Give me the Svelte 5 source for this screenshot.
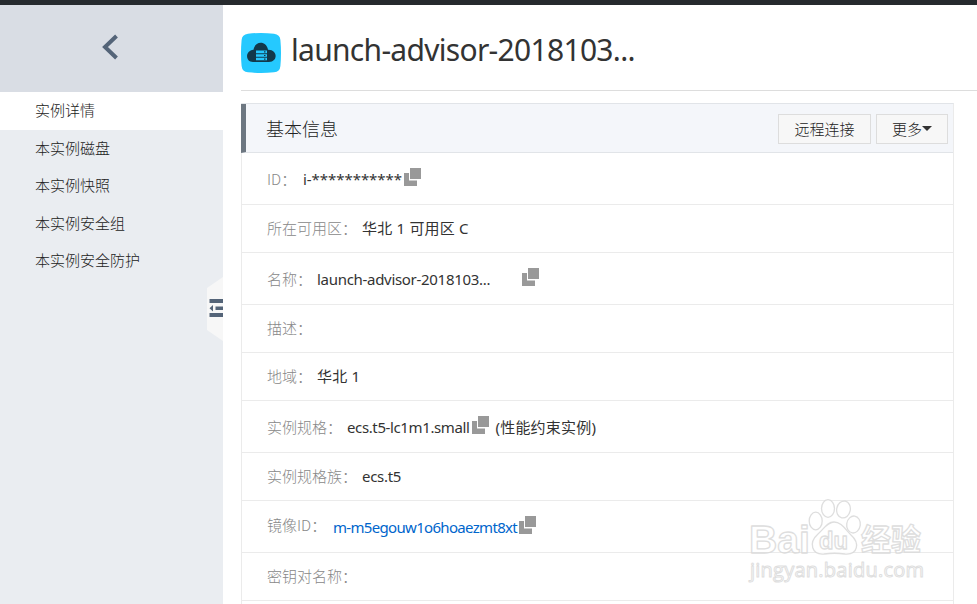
<script>
  const menu = ['实例详情', '本实例磁盘', '本实例快照', '本实例安全组', '本实例安全防护'];
  const rows = [
    { label: 'ID：', value: 'i-***********', w: 36, ls: -0.05, copy: true, tall: true },
    { label: '所在可用区：', value: '华北 1 可用区 C', w: 95, ls: 0.2 },
    { label: '名称：', value: 'launch-advisor-2018103...', w: 50, ls: -0.3, copy: true, tall: true, far: true },
    { label: '描述：', value: '', w: 50 },
    { label: '地域：', value: '华北 1', w: 50, ls: 0.2 },
    { label: '实例规格：', value: 'ecs.t5-lc1m1.small', w: 80, ls: -0.38, copy: true, tall: true, note: '(性能约束实例)' },
    { label: '实例规格族：', value: 'ecs.t5', w: 95, ls: -0.3 },
    { label: '镜像ID：', value: 'm-m5egouw1o6hoaezmt8xt', w: 66, ls: -0.68, copy: true, tall: true, link: true },
    { label: '密钥对名称：', value: '', w: 95 },
    { label: '', value: '', w: 0 }
  ];
</script>

<div class="page">
  <div class="topbar"></div>
  <div class="body">
    <aside>
      <div class="back">
        <svg width="18" height="26" viewBox="0 0 18 26"><path d="M15.5 2 L4 13 L15.5 24" fill="none" stroke="#546478" stroke-width="4" /></svg>
      </div>
      <nav>
        {#each menu as item, i}
          <div class="item" class:active={i === 0}>{item}</div>
        {/each}
      </nav>
      <div class="handle">
        <svg width="16" height="64" viewBox="0 0 16 64">
          <path d="M16 0 L0 11 V53 L16 64Z" fill="#f7f7f7" />
          <path d="M2.500 22H16V26H2.500Z M8.500 29.500H16V33H8.500Z M2.500 36H16V40H2.500Z M6 28V34.500L2.500 31.200Z" fill="#546478" />
        </svg>
      </div>
    </aside>
    <main>
      <header>
        <svg class="logo" width="40" height="40" viewBox="0 0 40 40">
          <path d="M7 .8 Q20 -.8 33 .8 Q39 1.5 39.4 7 Q40.6 20 39.4 33 Q39 38.7 33 39.3 Q20 40.7 7 39.3 Q1.2 38.7 .6 33 Q-.6 20 .6 7 Q1 1.5 7 .8Z" fill="#25c9ff" />
          <path d="M12 29 C4 29 4 17.5 12.5 16.8 C14 7.5 25.5 7.500 27 16.800 C37 16.500 37 29 28 29Z" fill="#12394b" />
          <path d="M15 17.500H26V20.200H15Z M15 21.200H26V23.700H15Z M15 24.700H26V27.300H15Z" fill="#25c9ff" />
          <path d="M23 18.200h1.500v1.200h-1.500z M23 21.900h1.500v1.200h-1.500z M23 25.500h1.500v1.200h-1.500z" fill="#12394b" />
        </svg>
        <h1>launch-advisor-2018103...</h1>
      </header>
      <section>
        <div class="head">
          <h2>基本信息</h2>
          <button class="remote">远程连接</button>
          <button class="more">更多<svg width="10" height="5" viewBox="0 0 10 5"><path d="M0 0H10L5 5Z" fill="#333" /></svg></button>
        </div>
        {#each rows as r}
          <div class="row" class:tall={r.tall} class:image={r.link}>
            <span class="label" style:width="{r.w}px">{r.label}</span>
            <span class="value" class:link={r.link} style:letter-spacing="{r.ls ?? 0}px">{r.value}</span>
            {#if r.copy}
              <svg class="copy" class:far={r.far} width="17" height="18" viewBox="0 0 17 18"><path d="M6 0H17V11H6Z M0 5H5V12.500H13V18H0Z" fill="#999" /></svg>
            {/if}
            {#if r.note}<span class="value note">{r.note}</span>{/if}
          </div>
        {/each}
      </section>
    </main>
  </div>
  <svg class="mark" width="190" height="94" viewBox="740 495 190 94">
    <g fill="#fff" stroke="#d9d9d9" stroke-width="1.300" stroke-linejoin="round">
      <text class="bai" x="749" y="553" font-size="39" font-weight="700" textLength="61" lengthAdjust="spacingAndGlyphs">Bai</text>
      <ellipse cx="815.700" cy="521" rx="6.500" ry="8.800" />
      <ellipse cx="828" cy="508.500" rx="6.500" ry="8.800" />
      <ellipse cx="843.500" cy="509.500" rx="6.800" ry="8.500" transform="rotate(12 843.500 509.500)" />
      <ellipse cx="853.500" cy="524.500" rx="6.800" ry="8.500" transform="rotate(8 853.500 524.500)" />
      <path d="M834 522 C827 522 824 529 818 534 C808 543 812 555 824 554 C831 553 838 553 845 554 C858 555 860 543 851 535 C845 529 841 522 834 522Z" />
      <text class="bai" x="819" y="549" font-size="24" font-weight="700" textLength="29" lengthAdjust="spacingAndGlyphs">du</text>
      <text x="861" y="550" font-size="30" font-weight="700" textLength="60">经验</text>
      <text class="url" x="750" y="577" font-size="20" stroke-width="1" textLength="174">jingyan.baidu.com</text>
    </g>
  </svg>
</div>

<style>
  :global(body) { margin: 0; background: #fff; }
  .page {
    position: relative; width: 977px; height: 604px; overflow: hidden;
    font-family: "Noto Sans", "Noto Sans CJK SC", sans-serif;
    font-size: 15px; color: #333; background: #fff;
  }
  .topbar { height: 5px; background: #262a2e; }
  .body { display: flex; height: 599px; }
  aside { position: relative; width: 223px; flex: none; background: #eaedf1; }
  .back { height: 87px; background: #d9dde4; display: flex; align-items: center; justify-content: center; box-sizing: border-box; padding: 0 4px 3px 0; }
  .item { height: 37.500px; line-height: 35px; padding-left: 35px; font-family: "Noto Sans CJK SC", sans-serif; font-weight: 300; color: #222; }
  .item.active { background: #fff; }
  .handle { position: absolute; right: 0; top: 272px; height: 64px; }
  .handle svg { display: block; }
  main { flex: 1; min-width: 0; padding-left: 18px; }
  header { display: flex; align-items: flex-start; height: 85px; border-bottom: 1px solid #ddd; }
  .logo { margin-top: 28px; flex: none; }
  h1 { margin: 22px 0 0 10px; font-size: 30px; line-height: 46px; font-weight: 400; letter-spacing: -0.7px; white-space: nowrap; }
  section { width: 711px; margin-top: 12px; border: 1px solid #e8e8e8; border-color: #e1e4e8 #ebebeb; }
  .head { display: flex; align-items: center; height: 48px; margin-left: -1px; border-left: 5px solid #6d7781; border-bottom: 1px solid #e1e4e8; background: #f4f6fa; padding: 0 5px 0 20px; }
  h2 { flex: 1; margin: 0; font: 300 18px/48px "Noto Sans CJK SC", sans-serif; color: #222; }
  button { box-sizing: border-box; height: 30px; margin: 1px 0 0; padding: 0; border: 1px solid #ddd; background: #f7f7f7; color: #222; font: 300 15px/28px "Noto Sans CJK SC", sans-serif; display: flex; align-items: center; justify-content: center; }
  .remote { width: 93px; }
  .more { width: 72px; margin-left: 5px; }
  .row { display: flex; align-items: center; height: 47px; border-bottom: 1px solid #ebebeb; padding-left: 25px; white-space: nowrap; line-height: 24px; }
  .row.tall { height: 51px; }
  .label { color: #888; font-family: "Noto Sans CJK SC", sans-serif; font-weight: 300; flex: none; padding-bottom: 2px; }
  .tall .label { padding: 0; }
  .image .label { padding-bottom: 4px; }
  .value { font-size: 15px; padding-bottom: 2px; }
  .tall .value { padding: 0; }
  .link { color: #06c; }
  .copy { margin: 0 0 3px 2px; }
  .copy.far { margin-left: 32px; }
  .value.note { margin-left: 7px; letter-spacing: .2px; }
  .mark { position: absolute; left: 740px; top: 495px; opacity: .85; }
  .bai { font-family: "Liberation Sans", sans-serif; }
  .url { font-family: "Open Sans", sans-serif; }
</style>
